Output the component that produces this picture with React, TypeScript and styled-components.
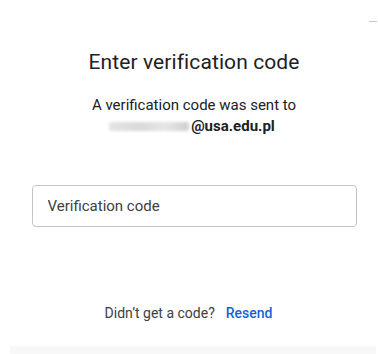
import React from "react";
import styled, { createGlobalStyle } from "styled-components";

const Global = createGlobalStyle`
  html, body { margin: 0; padding: 0; background: #ffffff; }
  body { font-family: Roboto, "Noto Sans", Arial, sans-serif; -webkit-font-smoothing: antialiased; }
`;

const Page = styled.div`
  position: relative;
  width: 378px;
  height: 354px;
  display: flex;
  flex-direction: column;
  align-items: center;
  box-sizing: border-box;
  padding: 50px 0 0 10px;
  overflow: hidden;
`;

const CornerMark = styled.div`
  position: absolute;
  top: 21px;
  right: 1px;
  width: 8px;
  height: 1px;
  background: #c8c8c8;
`;

const Title = styled.h1`
  margin: 0;
  font-size: 21px;
  line-height: 24px;
  font-weight: 400;
  color: #202124;
  letter-spacing: 0.1px;
`;

const Info = styled.p`
  margin: 21px 0 0;
  font-size: 15px;
  line-height: 21px;
  color: #202124;
  text-align: center;
`;

const Email = styled.span`
  display: inline-flex;
  align-items: center;
  font-weight: 700;
  margin-right: 4px;
`;

const Redacted = styled.span`
  display: inline-block;
  width: 80px;
  height: 9px;
  margin-right: 2px;
  background: linear-gradient(90deg, #e4e4e4, #d9d9d9 40%, #e6e6e6 70%, #cfcfcf);
  filter: blur(1.5px);
  border-radius: 3px;
`;

const Field = styled.div`
  margin-top: 48px;
  width: 325px;
  height: 42px;
  box-sizing: border-box;
  border: 1px solid #c4c4c4;
  border-radius: 4px;
  display: flex;
  align-items: center;
  padding: 0 15px;
`;

const Input = styled.input`
  border: none;
  outline: none;
  width: 100%;
  font-family: Roboto, "Noto Sans", Arial, sans-serif;
  font-size: 15px;
  color: #202124;
  padding: 0;
  background: transparent;
  &::placeholder { color: #3c4043; }
`;

const ResendRow = styled.div`
  margin-top: 77px;
  margin-right: 11px;
  display: flex;
  align-items: baseline;
  gap: 11px;
  font-size: 14px;
  line-height: 18px;
  color: #3c4043;
`;

const ResendLink = styled.a`
  color: #1a5fd0;
  font-weight: 500;
  text-decoration: none;
  cursor: pointer;
`;

const Footer = styled.div`
  margin-top: auto;
  align-self: stretch;
  margin-right: 2px;
  height: 8px;
  background: #f8f8f8;
`;

export default function App() {
  return (
    <>
      <Global />
      <Page>
        <CornerMark />
        <Title>Enter verification code</Title>
        <Info>
          A verification code was sent to
          <br />
          <Email>
            <Redacted />
            @usa.edu.pl
          </Email>
        </Info>
        <Field>
          <Input placeholder="Verification code" />
        </Field>
        <ResendRow>
          <span>Didn’t get a code?</span>
          <ResendLink>Resend</ResendLink>
        </ResendRow>
        <Footer />
      </Page>
    </>
  );
}
